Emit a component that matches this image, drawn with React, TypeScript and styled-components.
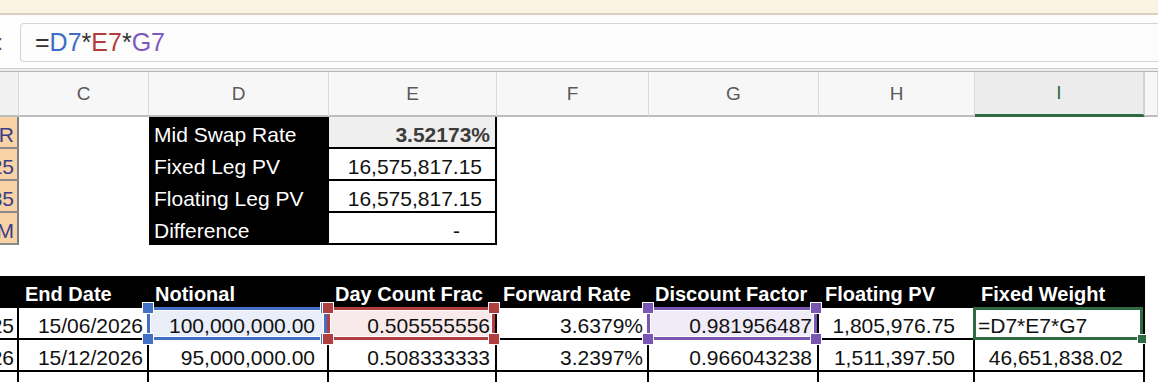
import React from "react";
import styled, { createGlobalStyle, css } from "styled-components";

const GlobalStyle = createGlobalStyle`
  html, body {
    margin: 0;
    padding: 0;
    background: #fff;
  }
  body {
    font-family: "Liberation Sans", Arial, sans-serif;
    color: #111;
  }
`;

const COLS = "19px 130px 180px 168px 152px 170px 156px 170px 1fr";

const Window = styled.div`
  width: 1158px;
  height: 382px;
  overflow: hidden;
  background: #fff;
  display: flex;
  flex-direction: column;
`;

const Banner = styled.div`
  flex: none;
  height: 13px;
  background: #fbf3e1;
  border-bottom: 2px solid #d9d0bf;
`;

const FormulaBar = styled.div`
  flex: none;
  height: 53px;
  box-sizing: border-box;
  padding-top: 8px;
  display: flex;
  align-items: flex-start;
  background: #fefefe;
`;

const Grip = styled.span`
  flex: none;
  width: 20px;
  height: 39px;
  display: flex;
  align-items: center;
  margin-left: -3px;
  margin-right: 3px;
  font-size: 22px;
  color: #555;
`;

const FormulaBox = styled.div`
  flex: 1;
  height: 39px;
  box-sizing: border-box;
  border: 1px solid #d4d4d4;
  border-right: none;
  border-radius: 4px 0 0 4px;
  background: #fcfcfc;
  display: flex;
  align-items: center;
  padding-left: 14px;
  font-size: 25px;
  color: #333;
`;

const Token = styled.span<{ $c?: string }>`
  color: ${(p) => p.$c ?? "#333"};
`;

const Divider = styled.div`
  flex: none;
  height: 4px;
  box-sizing: border-box;
  border-top: 1px solid #cdcdcd;
  border-bottom: 1px solid #b6b6b6;
  background: #ededed;
`;

const HeaderRow = styled.div`
  flex: none;
  height: 45px;
  display: grid;
  grid-template-columns: ${COLS};
`;

const ColLetter = styled.div<{ $active?: boolean; $stub?: boolean }>`
  box-sizing: border-box;
  display: flex;
  align-items: center;
  justify-content: center;
  font-size: 19px;
  color: #595959;
  background: ${(p) => (p.$stub ? "#f1f1f1" : "#f7f7f7")};
  border-right: 1px solid #dadada;
  border-bottom: 2px solid #bdbdbd;
  ${(p) =>
    p.$active &&
    css`
      background: #ececec;
      color: #2f6b42;
      border-bottom: 3px solid #2f6b42;
      border-right: 2px solid #d2d2d2;
    `}
`;

const Row = styled.div<{ $h: number }>`
  flex: none;
  height: ${(p) => p.$h}px;
  display: grid;
  grid-template-columns: ${COLS};
`;

const Cell = styled.div<{
  $bg?: string;
  $right?: string;
  $bottom?: string;
  $padL?: number;
  $padR?: number;
  $left?: boolean;
}>`
  position: relative;
  box-sizing: border-box;
  min-width: 0;
  display: flex;
  align-items: flex-end;
  justify-content: ${(p) => (p.$left ? "flex-start" : "flex-end")};
  padding: 0 ${(p) => p.$padR ?? 5}px 0 ${(p) => p.$padL ?? 5}px;
  background: ${(p) => p.$bg ?? "transparent"};
  border-right: 2px solid ${(p) => p.$right ?? "transparent"};
  border-bottom: 2px solid ${(p) => p.$bottom ?? "transparent"};
  font-size: 21px;
  line-height: 24px;
  white-space: nowrap;
`;

const StubCell = styled(Cell)<{ $ink?: string }>`
  overflow: hidden;
  color: ${(p) => p.$ink ?? "#111"};
`;

const LabelCell = styled(Cell)`
  background: #000;
  color: #fff;
  justify-content: flex-start;
`;

const ValueCell = styled(Cell)<{ $strong?: boolean }>`
  border-right-color: #000;
  border-bottom-color: #000;
  ${(p) =>
    p.$strong &&
    css`
      background: #efefef;
      color: #3c3c3c;
      font-weight: 700;
    `}
`;

const HeadCell = styled(Cell)`
  background: #000;
  color: #fff;
  font-weight: 700;
  font-size: 20px;
  justify-content: flex-start;
  padding-left: 6px;
`;

const RefBox = styled.div<{ $c: string }>`
  position: absolute;
  top: -1px;
  left: -2px;
  right: 0;
  bottom: -2px;
  border: 3px solid ${(p) => p.$c};
  box-shadow: inset 0 0 0 1px #fff;
  z-index: 1;
  pointer-events: none;
`;

type Corner = "tl" | "tr" | "bl" | "br";

const Handle = styled.span<{ $c: string; $at: Corner; $size: number }>`
  position: absolute;
  width: ${(p) => p.$size}px;
  height: ${(p) => p.$size}px;
  background: ${(p) => p.$c};
  border: 1px solid #fff;
  ${(p) => {
    const off = -Math.round(p.$size / 2 + 2.5);
    return `${p.$at[0] === "t" ? "top" : "bottom"}: ${off}px; ${p.$at[1] === "l" ? "left" : "right"}: ${off}px;`;
  }}
`;

type Ref = { c: string; fill: string; corners: Corner[]; size: number };

const ALL: Corner[] = ["tl", "tr", "bl", "br"];
const BLUE: Ref = { c: "#4170c4", fill: "#e9eef8", corners: ALL, size: 10 };
const RED: Ref = { c: "#b23f3f", fill: "#f8eaea", corners: ALL, size: 10 };
const PURPLE: Ref = { c: "#7b57b4", fill: "#efebf7", corners: ALL, size: 10 };
const ACTIVE: Ref = { c: "#2f6b42", fill: "#fff", corners: ["br"], size: 8 };

const letters = ["", "C", "D", "E", "F", "G", "H", "I", ""];

const summary = [
  { stub: "R", label: "Mid Swap Rate", value: "3.52173%", strong: true, padR: 5 },
  { stub: "25", label: "Fixed Leg PV", value: "16,575,817.15", padR: 13 },
  { stub: "35", label: "Floating Leg PV", value: "16,575,817.15", padR: 13 },
  { stub: "M", label: "Difference", value: "-", padR: 35 },
];

const headings = [
  "",
  "End Date",
  "Notional",
  "Day Count Frac",
  "Forward Rate",
  "Discount Factor",
  "Floating PV",
  "Fixed Weight",
];

const dataRows = [
  ["25", "15/06/2026", "100,000,000.00", "0.505555556", "3.6379%", "0.981956487", "1,805,976.75", "=D7*E7*G7"],
  ["26", "15/12/2026", "95,000,000.00", "0.508333333", "3.2397%", "0.966043238", "1,511,397.50", "46,651,838.02"],
];

const padRight = [3, 4, 12, 5, 4, 5, 18, 20];

const refsRow7: (Ref | undefined)[] = [undefined, undefined, BLUE, RED, undefined, PURPLE, undefined, ACTIVE];

const App = () => {
  return (
    <Window>
      <GlobalStyle />
      <Banner />
      <FormulaBar>
        <Grip>:</Grip>
        <FormulaBox>
          <Token>=</Token>
          <Token $c="#3d6cc7">D7</Token>
          <Token>*</Token>
          <Token $c="#b23c3c">E7</Token>
          <Token>*</Token>
          <Token $c="#7e58c0">G7</Token>
        </FormulaBox>
      </FormulaBar>
      <Divider />
      <HeaderRow>
        {letters.map((l, i) => (
          <ColLetter key={i} $stub={i === 0} $active={l === "I"}>
            {l}
          </ColLetter>
        ))}
      </HeaderRow>

      {summary.map((s) => (
        <Row $h={32} key={s.label}>
          <StubCell $bg="#f9d2a6" $right="#808080" $bottom="#8a8a8a" $ink="#3a3e86" $padR={3}>
            {s.stub}
          </StubCell>
          <Cell />
          <LabelCell>{s.label}</LabelCell>
          <ValueCell $strong={s.strong} $padR={s.padR}>
            {s.value}
          </ValueCell>
          <Cell />
          <Cell />
          <Cell />
          <Cell />
          <Cell />
        </Row>
      ))}

      <Row $h={31} />

      <Row $h={32}>
        {headings.map((h, i) => (
          <HeadCell key={i}>{h}</HeadCell>
        ))}
        <Cell />
      </Row>

      {dataRows.map((r, ri) => (
        <Row $h={32} key={ri}>
          {r.map((v, ci) => {
            const ref = ri === 0 ? refsRow7[ci] : undefined;
            if (ci === 0) {
              return (
                <StubCell key={ci} $right="#000" $bottom="#000" $padR={padRight[0]}>
                  {v}
                </StubCell>
              );
            }
            const editing = ref === ACTIVE;
            return (
              <Cell
                key={ci}
                $right="#000"
                $bottom="#000"
                $bg={ref ? ref.fill : undefined}
                $left={editing}
                $padL={editing ? 3 : 5}
                $padR={padRight[ci]}
              >
                {v}
                {ref && (
                  <RefBox $c={ref.c}>
                    {ref.corners.map((k) => (
                      <Handle key={k} $c={ref.c} $at={k} $size={ref.size} />
                    ))}
                  </RefBox>
                )}
              </Cell>
            );
          })}
          <Cell />
        </Row>
      ))}

      <Row $h={14}>
        {padRight.map((_, i) => (
          <Cell key={i} $right="#000" />
        ))}
        <Cell />
      </Row>
    </Window>
  );
};

export default App;
